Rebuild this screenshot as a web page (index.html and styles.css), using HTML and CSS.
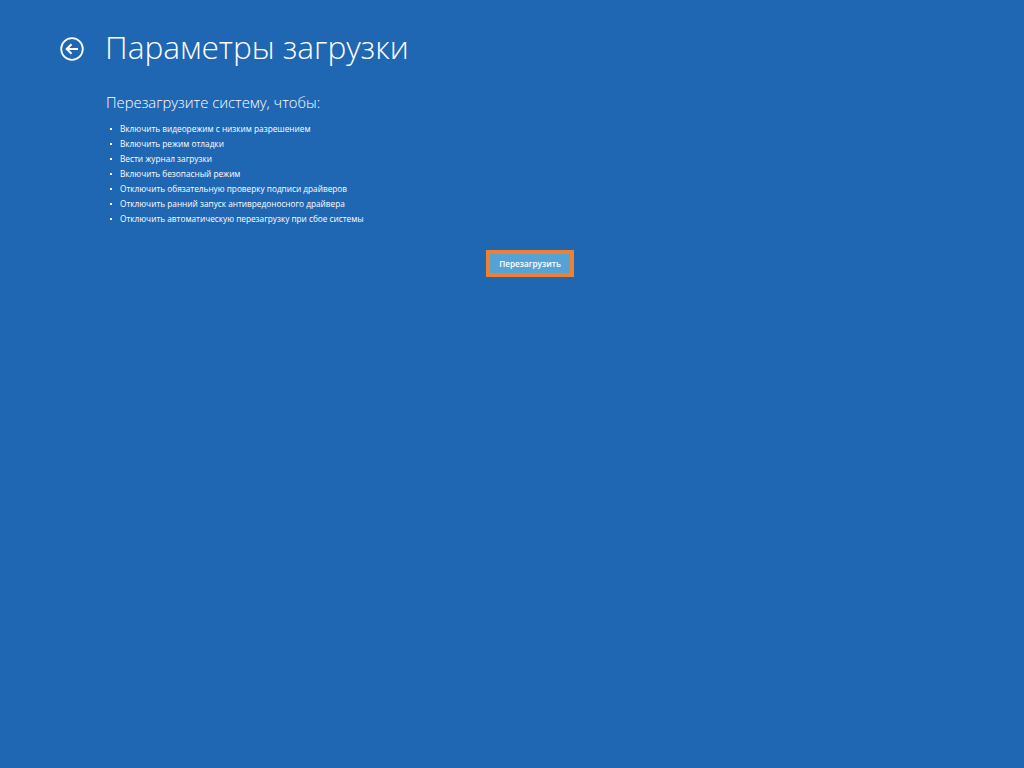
FILE: index.html
```html
<!DOCTYPE html>
<html lang="ru">
<head>
    <meta charset="UTF-8">
    <meta name="viewport" content="width=device-width, initial-scale=1.0">
    <title>Параметры загрузки</title>
    <link rel="stylesheet" href="styles.css">
</head>
<body>
    <header class="header">
        <svg class="back-icon" width="24" height="24" viewBox="0 0 24 24" aria-label="Назад">
            <circle cx="12" cy="12" r="10.8" fill="none" stroke="#fff" stroke-width="1.8"/>
            <path d="M18 12H7M11.5 7.2 6.7 12l4.8 4.8" fill="none" stroke="#fff" stroke-width="2"/>
        </svg>
        <h1 class="title">Параметры загрузки</h1>
    </header>
    <main class="content">
        <h2 class="subtitle">Перезагрузите систему, чтобы:</h2>
        <ul class="options">
            <li>Включить видеорежим с низким разрешением</li>
            <li>Включить режим отладки</li>
            <li>Вести журнал загрузки</li>
            <li>Включить безопасный режим</li>
            <li>Отключить обязательную проверку подписи драйверов</li>
            <li>Отключить ранний запуск антивредоносного драйвера</li>
            <li>Отключить автоматическую перезагрузку при сбое системы</li>
        </ul>
    </main>
    <div class="actions">
        <button class="restart-btn">Перезагрузить</button>
    </div>
</body>
</html>
```

FILE: styles.css
```css
* {
    margin: 0;
    padding: 0;
    box-sizing: border-box;
}

html, body {
    height: 100%;
}

body {
    font-family: "Open Sans", "Noto Sans", sans-serif;
    background-color: #1f66b3;
    color: #fff;
    overflow: hidden;
}

/* Заголовок */
.header {
    display: flex;
    align-items: center;
    gap: 21px;
    padding: 25px 0 0 60px;
    height: 72px;
}

.back-icon {
    flex: none;
}

.title {
    font-size: 31.7px;
    font-weight: 300;
    line-height: 44px;
    margin-top: -4px;
}

/* Список */
.content {
    padding: 20px 0 0 106px;
}

.subtitle {
    font-size: 14.8px;
    font-weight: 300;
    line-height: 20px;
    margin-bottom: 9px;
}

.options {
    list-style: none;
}

.options li {
    position: relative;
    font-size: 8.25px;
    line-height: 15px;
    padding-left: 14px;
}

.options li::before {
    content: "";
    position: absolute;
    left: 4px;
    top: 7px;
    width: 2px;
    height: 2px;
    background-color: #fff;
}

/* Кнопка */
.actions {
    display: flex;
    padding: 24px 0 0 486px;
}

.restart-btn {
    width: 88px;
    height: 27px;
    border: 4px solid #ee8033;
    background-color: #55a3d6;
    color: #fff;
    font-family: inherit;
    font-size: 8.2px;
    font-weight: 600;
}
```
